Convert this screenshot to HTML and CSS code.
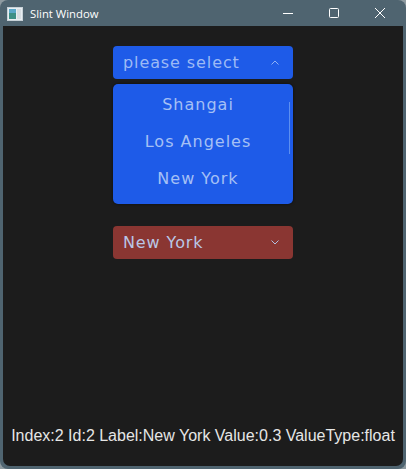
FILE: index.html
```html
<!DOCTYPE html>
<html>
<head>
<meta charset="utf-8">
<link rel="stylesheet" href="styles.css">
</head>
<body>
<div class="window">
  <div class="titlebar">
    <div class="app-icon">
      <svg width="16" height="14" viewBox="0 0 16 14">
        <rect x="0.5" y="0.5" width="15" height="13" fill="#e8eef2" stroke="#c8d2d8"/>
        <rect x="2" y="2" width="7" height="10" fill="#3d8f86"/>
        <rect x="2" y="2" width="7" height="4" fill="#5aa7c8"/>
        <rect x="10" y="2" width="4" height="10" fill="#d7dde2"/>
      </svg>
    </div>
    <div class="title">Slint Window</div>
    <div class="controls">
      <div class="ctl">
        <svg width="12" height="12" viewBox="0 0 12 12"><path d="M1 6.5h10" stroke="#fff" stroke-width="1"/></svg>
      </div>
      <div class="ctl">
        <svg width="12" height="12" viewBox="0 0 12 12"><rect x="1.5" y="1.5" width="9" height="9" rx="1" fill="none" stroke="#fff" stroke-width="1"/></svg>
      </div>
      <div class="ctl">
        <svg width="12" height="12" viewBox="0 0 12 12"><path d="M1 1L11 11M11 1L1 11" stroke="#fff" stroke-width="1"/></svg>
      </div>
    </div>
  </div>
  <div class="content">
    <div class="column">
      <div class="combo blue">
        <span class="combo-text">please select</span>
        <svg class="chev" width="8" height="5" viewBox="0 0 8 5"><path d="M0.5 4.5L4 1L7.5 4.5" fill="none" stroke="#8fb1f5" stroke-width="1"/></svg>
      </div>
      <div class="popup">
        <div class="item">Shangai</div>
        <div class="item">Los Angeles</div>
        <div class="item">New York</div>
        <div class="scrollbar"></div>
      </div>
      <div class="combo red">
        <span class="combo-text">New York</span>
        <svg class="chev" width="8" height="5" viewBox="0 0 8 5"><path d="M0.5 0.5L4 4L7.5 0.5" fill="none" stroke="#b0c0e0" stroke-width="1"/></svg>
      </div>
    </div>
    <div class="status">Index:2 Id:2 Label:New York Value:0.3 ValueType:float</div>
  </div>
</div>
</body>
</html>
```
FILE: styles.css
```css
html, body {
  margin: 0;
  padding: 0;
  width: 406px;
  height: 469px;
  background: #8e9aa0;
  overflow: hidden;
}
.window {
  width: 406px;
  height: 469px;
  box-sizing: border-box;
  background: #4f6470;
  border-radius: 8px 8px 8px 8px;
  padding: 0 3px 3px 3px;
  display: flex;
  flex-direction: column;
  overflow: hidden;
}
.titlebar {
  height: 26px;
  display: flex;
  align-items: center;
  flex-shrink: 0;
}
.app-icon {
  width: 16px;
  height: 14px;
  margin-left: 4px;
  margin-top: 1px;
}
.app-icon svg { display: block; }
.title {
  font-family: "Segoe UI", "Open Sans", "Noto Sans", sans-serif;
  font-size: 11.3px;
  color: #ffffff;
  margin-left: 7px;
  margin-top: 1px;
}
.controls {
  margin-left: auto;
  display: flex;
  height: 26px;
}
.ctl {
  width: 46px;
  display: flex;
  align-items: center;
  justify-content: center;
}
.ctl svg { display: block; }
.content {
  flex: 1;
  background: #1c1c1c;
  border-radius: 0 0 7px 7px;
  display: flex;
  flex-direction: column;
  align-items: center;
}
.column {
  margin-top: 20px;
  width: 180px;
  display: flex;
  flex-direction: column;
}
.combo {
  height: 33px;
  border-radius: 4px;
  display: flex;
  align-items: center;
  padding: 0 10px 0 10px;
  box-sizing: border-box;
  font-family: "DejaVu Sans", sans-serif;
  font-size: 16px;
  letter-spacing: 0.9px;
}
.combo-text { flex: 1; }
.chev { display: block; margin-right: 4px; }
.blue {
  background: #1e5be8;
  color: #9dbaf5;
}
.red {
  background: #8a3632;
  color: #b9c7e6;
  margin-top: 22px;
}
.popup {
  margin-top: 5px;
  height: 120px;
  background: #1e5be8;
  border-radius: 5px;
  box-shadow: 0 0 3px rgba(0,0,0,0.6);
  position: relative;
  display: flex;
  flex-direction: column;
  padding: 2px 10px 0 0;
  box-sizing: border-box;
  font-family: "DejaVu Sans", sans-serif;
  font-size: 16px;
  letter-spacing: 1px;
  color: #a5c0f5;
}
.item {
  height: 37px;
  display: flex;
  align-items: center;
  justify-content: center;
}
.scrollbar {
  position: absolute;
  right: 3px;
  top: 18px;
  width: 1px;
  height: 52px;
  background: #5c8ff0;
}
.status {
  margin-top: auto;
  margin-bottom: 21px;
  font-family: "Liberation Sans", Arial, sans-serif;
  font-size: 16px;
  color: #e6e6e6;
}
```
